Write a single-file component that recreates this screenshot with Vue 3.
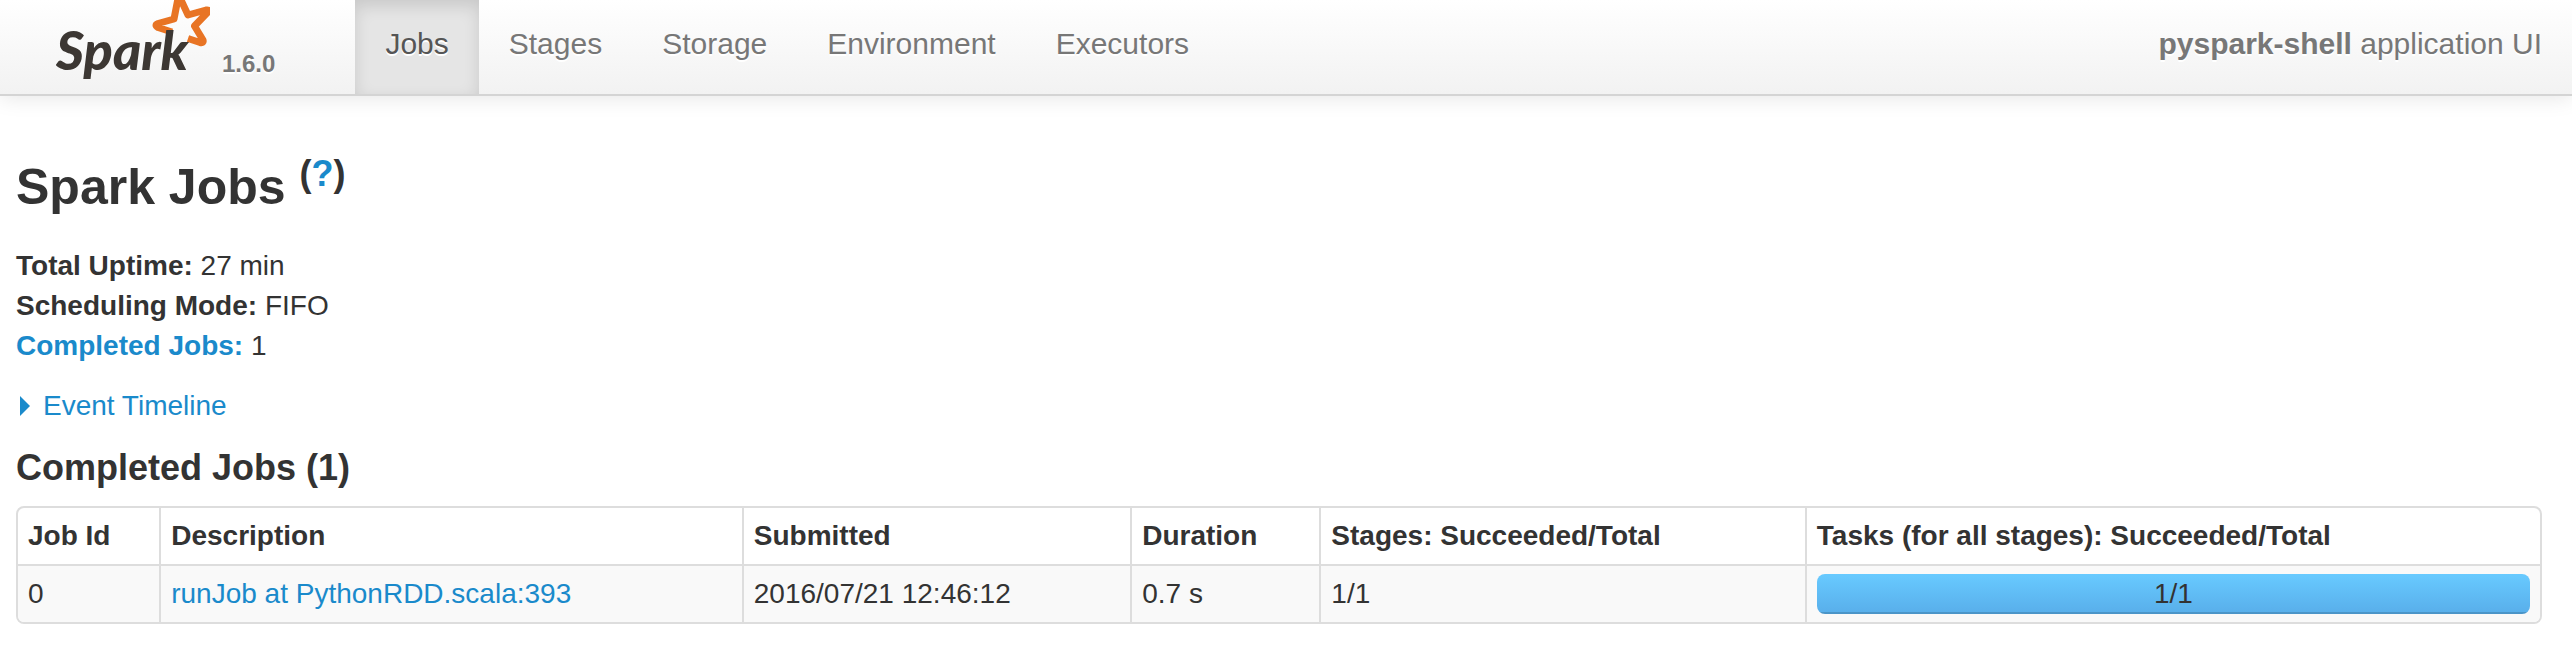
<script setup>
const version = '1.6.0'
const appName = 'pyspark-shell'

const tabs = [
  { label: 'Jobs', href: '#jobs', active: true },
  { label: 'Stages', href: '#stages' },
  { label: 'Storage', href: '#storage' },
  { label: 'Environment', href: '#environment' },
  { label: 'Executors', href: '#executors' },
]

const jobs = [
  {
    id: 0,
    description: 'runJob at PythonRDD.scala:393',
    submitted: '2016/07/21 12:46:12',
    duration: '0.7 s',
    stages: '1/1',
    tasksDone: 1,
    tasksTotal: 1,
  },
]
</script>

<template>
  <div class="page">
    <header class="navbar">
      <a class="brand" href="#jobs">
        <svg class="logo" width="154" height="94" viewBox="0 0 154 94" role="img" aria-label="Spark">
          <path
            class="star"
            d="M116 32 L102 27.5 Q98 25 102 23.5 L118 19 L121.500 1 Q123 -3 125.500 1 L132 15 L150 10 Q154 9.500 152 12 L138.500 26 L147 40 Q148 43.500 144 42.500 L132 38.500"
          />
          <text class="wordmark" x="0" y="70">Spark</text>
        </svg>
        <span class="version">{{ version }}</span>
      </a>
      <nav class="tabs">
        <a
          v-for="tab in tabs"
          :key="tab.label"
          class="tab"
          :class="{ active: tab.active }"
          :href="tab.href"
        >{{ tab.label }}</a>
      </nav>
      <p class="app-name"><strong>{{ appName }}</strong> application UI</p>
    </header>

    <main class="content">
      <h1 class="title">Spark Jobs <sup class="help">(<a href="#help">?</a>)</sup></h1>

      <ul class="summary">
        <li><strong>Total Uptime:</strong> 27 min</li>
        <li><strong>Scheduling Mode:</strong> FIFO</li>
        <li><a href="#completed"><strong>Completed Jobs:</strong></a> 1</li>
      </ul>

      <button class="timeline" type="button" aria-expanded="false">
        <svg class="caret" width="10" height="20" viewBox="0 0 10 20" aria-hidden="true">
          <path d="M0 0 L10 10 L0 20 Z" />
        </svg>
        Event Timeline
      </button>

      <h2 id="completed" class="subtitle">Completed Jobs ({{ jobs.length }})</h2>

      <table class="jobs" aria-labelledby="completed">
        <colgroup>
          <col class="col-id" />
          <col class="col-description" />
          <col class="col-submitted" />
          <col class="col-duration" />
          <col class="col-stages" />
          <col />
        </colgroup>
        <thead>
          <tr>
            <th scope="col">Job Id</th>
            <th scope="col">Description</th>
            <th scope="col">Submitted</th>
            <th scope="col">Duration</th>
            <th scope="col">Stages: Succeeded/Total</th>
            <th scope="col">Tasks (for all stages): Succeeded/Total</th>
          </tr>
        </thead>
        <tbody>
          <tr v-for="job in jobs" :key="job.id">
            <td>{{ job.id }}</td>
            <td><a href="#job">{{ job.description }}</a></td>
            <td>{{ job.submitted }}</td>
            <td>{{ job.duration }}</td>
            <td>{{ job.stages }}</td>
            <td>
              <div
                class="progress"
                role="progressbar"
                aria-label="Tasks succeeded"
                :aria-valuenow="job.tasksDone"
                :aria-valuemax="job.tasksTotal"
              >
                <div class="bar" :style="{ width: (job.tasksDone / job.tasksTotal) * 100 + '%' }"></div>
                <span class="count">{{ job.tasksDone }}/{{ job.tasksTotal }}</span>
              </div>
            </td>
          </tr>
        </tbody>
      </table>
    </main>
  </div>
</template>

<style>
body {
  margin: 0;
  background: #fff;
}
</style>

<style scoped>
.page {
  color: #333;
  font-family: "Liberation Sans", Arial, sans-serif;
  font-size: 28px;
  line-height: 40px;
}

a {
  color: #1a8acb;
  text-decoration: none;
}

.navbar {
  display: flex;
  align-items: stretch;
  padding-right: 30px;
  border-bottom: 2px solid #d4d4d4;
  background: linear-gradient(#fff, #f2f2f2);
  box-shadow: 0 2px 20px rgba(0, 0, 0, 0.1);
  color: #777;
  font-size: 30px;
  text-shadow: 0 2px 0 #fff;
}

.brand {
  display: flex;
  align-items: flex-start;
  gap: 12px;
  margin-right: 80px;
  padding-left: 56px;
  color: #777;
}

.logo {
  display: block;
}

.star {
  fill: none;
  stroke: #e87424;
  stroke-width: 7;
  stroke-linejoin: round;
}

.wordmark {
  fill: #3c3733;
  font-family: Lato, "Liberation Sans", sans-serif;
  font-size: 54px;
  font-style: italic;
  font-weight: 900;
  text-shadow: none;
}

.version {
  align-self: flex-end;
  padding-bottom: 10px;
  font-size: 24px;
  font-weight: 700;
}

.tabs {
  display: flex;
}

.tab {
  padding: 24px 30px 30px;
  color: #777;
}

.tab.active {
  background: #e5e5e5;
  box-shadow: inset 0 6px 16px rgba(0, 0, 0, 0.125);
  color: #555;
}

.app-name {
  margin: 0 0 0 auto;
  padding-top: 24px;
}

.content {
  padding: 61px 30px 32px 16px;
}

.title {
  margin: 0 0 29px;
  font-size: 50px;
  line-height: 60px;
}

.help {
  font-size: 36px;
  line-height: 0;
  vertical-align: 18px;
}

.summary {
  margin: 0 0 20px;
  padding: 0;
  list-style: none;
}

.timeline {
  display: flex;
  align-items: center;
  gap: 13px;
  margin: 0 0 22px;
  padding: 0 4px;
  border: 0;
  background: none;
  color: #1a8acb;
  font: inherit;
  cursor: pointer;
}

.caret {
  fill: #1a8acb;
}

.subtitle {
  margin: 0 0 18px;
  font-size: 36px;
  line-height: 40px;
}

.jobs {
  width: 100%;
  table-layout: fixed;
  border: 2px solid #ddd;
  border-radius: 8px;
  border-collapse: separate;
  border-spacing: 0;
  overflow: hidden;
}

.col-id {
  width: 5.6%;
}

.col-description {
  width: 23.1%;
}

.col-submitted {
  width: 15.4%;
}

.col-duration {
  width: 7.5%;
}

.col-stages {
  width: 19.25%;
}

th,
td {
  padding: 8px 10px;
  text-align: left;
  vertical-align: top;
}

th + th,
td + td {
  border-left: 2px solid #ddd;
}

td {
  border-top: 2px solid #ddd;
  background: #f9f9f9;
}

.progress {
  display: grid;
  border-radius: 8px;
  overflow: hidden;
}

.bar,
.count {
  grid-area: 1 / 1;
}

.bar {
  background: linear-gradient(#68caff, #58aeea);
  box-shadow: inset 0 -2px 0 rgba(0, 0, 0, 0.15);
}

.count {
  text-align: center;
}
</style>
